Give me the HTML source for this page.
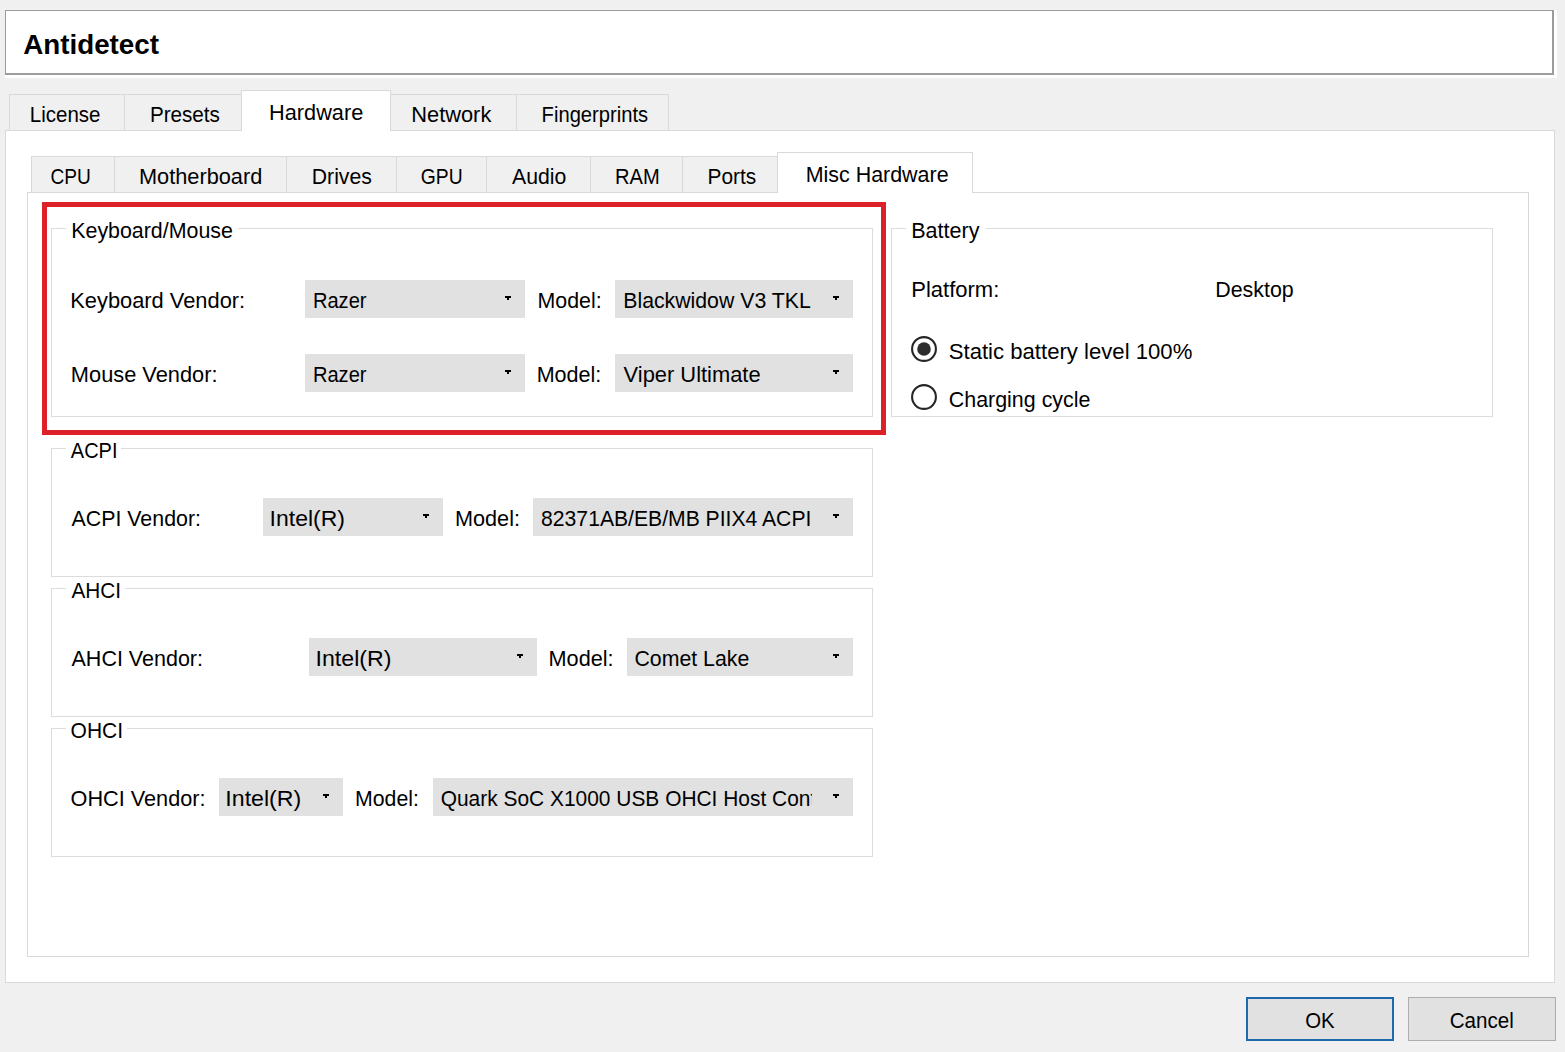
<!DOCTYPE html>
<html><head><meta charset="utf-8"><style>
html,body{margin:0;padding:0;background:#f0f0f0;overflow:hidden}
svg{display:block}
text{font-family:"Liberation Sans",sans-serif;fill:#000}
</style></head><body>
<svg width="1565" height="1052" viewBox="0 0 1565 1052" shape-rendering="crispEdges">
<defs><clipPath id="clip0"><rect x="0" y="0" width="812" height="1052"/></clipPath></defs>
<rect x="0" y="0" width="1565" height="1052" fill="#f0f0f0"/>
<rect x="5" y="10" width="1552" height="68" fill="#ffffff"/>
<rect x="5" y="10" width="1549" height="65" fill="#9c9c9c"/>
<rect x="6" y="11" width="1546" height="62" fill="#ffffff"/>
<rect x="5" y="130" width="1550" height="853" fill="#d9d9d9"/>
<rect x="6" y="131" width="1548" height="851" fill="#ffffff"/>
<rect x="9" y="94" width="116" height="37" fill="#d9d9d9"/>
<rect x="10" y="95" width="114" height="35" fill="#f0f0f0"/>
<rect x="124" y="94" width="118" height="37" fill="#d9d9d9"/>
<rect x="125" y="95" width="116" height="35" fill="#f0f0f0"/>
<rect x="390" y="94" width="127" height="37" fill="#d9d9d9"/>
<rect x="391" y="95" width="125" height="35" fill="#f0f0f0"/>
<rect x="516" y="94" width="153" height="37" fill="#d9d9d9"/>
<rect x="517" y="95" width="151" height="35" fill="#f0f0f0"/>
<rect x="241" y="90" width="150" height="41" fill="#d9d9d9"/>
<rect x="242" y="91" width="148" height="40" fill="#ffffff"/>
<rect x="27" y="192" width="1502" height="765" fill="#d9d9d9"/>
<rect x="28" y="193" width="1500" height="763" fill="#ffffff"/>
<rect x="31" y="156" width="84" height="37" fill="#d9d9d9"/>
<rect x="32" y="157" width="82" height="35" fill="#f0f0f0"/>
<rect x="114" y="156" width="173" height="37" fill="#d9d9d9"/>
<rect x="115" y="157" width="171" height="35" fill="#f0f0f0"/>
<rect x="286" y="156" width="111" height="37" fill="#d9d9d9"/>
<rect x="287" y="157" width="109" height="35" fill="#f0f0f0"/>
<rect x="396" y="156" width="91" height="37" fill="#d9d9d9"/>
<rect x="397" y="157" width="89" height="35" fill="#f0f0f0"/>
<rect x="486" y="156" width="105" height="37" fill="#d9d9d9"/>
<rect x="487" y="157" width="103" height="35" fill="#f0f0f0"/>
<rect x="590" y="156" width="93" height="37" fill="#d9d9d9"/>
<rect x="591" y="157" width="91" height="35" fill="#f0f0f0"/>
<rect x="682" y="156" width="96" height="37" fill="#d9d9d9"/>
<rect x="683" y="157" width="94" height="35" fill="#f0f0f0"/>
<rect x="777" y="152" width="196" height="41" fill="#d9d9d9"/>
<rect x="778" y="153" width="194" height="40" fill="#ffffff"/>
<rect x="51" y="228" width="822" height="189" fill="#dcdcdc"/>
<rect x="52" y="229" width="820" height="187" fill="#ffffff"/>
<rect x="66" y="228" width="172" height="1" fill="#ffffff"/>
<rect x="891" y="228" width="602" height="189" fill="#dcdcdc"/>
<rect x="892" y="229" width="600" height="187" fill="#ffffff"/>
<rect x="906" y="228" width="80" height="1" fill="#ffffff"/>
<rect x="51" y="448" width="822" height="129" fill="#dcdcdc"/>
<rect x="52" y="449" width="820" height="127" fill="#ffffff"/>
<rect x="66" y="448" width="55" height="1" fill="#ffffff"/>
<rect x="51" y="588" width="822" height="129" fill="#dcdcdc"/>
<rect x="52" y="589" width="820" height="127" fill="#ffffff"/>
<rect x="66" y="588" width="59" height="1" fill="#ffffff"/>
<rect x="51" y="728" width="822" height="129" fill="#dcdcdc"/>
<rect x="52" y="729" width="820" height="127" fill="#ffffff"/>
<rect x="66" y="728" width="61" height="1" fill="#ffffff"/>
<rect x="305" y="280" width="220" height="38" fill="#e1e1e1"/>
<rect x="505" y="296" width="6" height="2" fill="#000"/>
<rect x="507" y="298" width="2" height="2" fill="#000"/>
<rect x="615" y="280" width="238" height="38" fill="#e1e1e1"/>
<rect x="833" y="296" width="6" height="2" fill="#000"/>
<rect x="835" y="298" width="2" height="2" fill="#000"/>
<rect x="305" y="354" width="220" height="38" fill="#e1e1e1"/>
<rect x="505" y="370" width="6" height="2" fill="#000"/>
<rect x="507" y="372" width="2" height="2" fill="#000"/>
<rect x="615" y="354" width="238" height="38" fill="#e1e1e1"/>
<rect x="833" y="370" width="6" height="2" fill="#000"/>
<rect x="835" y="372" width="2" height="2" fill="#000"/>
<rect x="263" y="498" width="180" height="38" fill="#e1e1e1"/>
<rect x="423" y="514" width="6" height="2" fill="#000"/>
<rect x="425" y="516" width="2" height="2" fill="#000"/>
<rect x="533" y="498" width="320" height="38" fill="#e1e1e1"/>
<rect x="833" y="514" width="6" height="2" fill="#000"/>
<rect x="835" y="516" width="2" height="2" fill="#000"/>
<rect x="309" y="638" width="228" height="38" fill="#e1e1e1"/>
<rect x="517" y="654" width="6" height="2" fill="#000"/>
<rect x="519" y="656" width="2" height="2" fill="#000"/>
<rect x="627" y="638" width="226" height="38" fill="#e1e1e1"/>
<rect x="833" y="654" width="6" height="2" fill="#000"/>
<rect x="835" y="656" width="2" height="2" fill="#000"/>
<rect x="219" y="778" width="124" height="38" fill="#e1e1e1"/>
<rect x="323" y="794" width="6" height="2" fill="#000"/>
<rect x="325" y="796" width="2" height="2" fill="#000"/>
<rect x="433" y="778" width="420" height="38" fill="#e1e1e1"/>
<rect x="833" y="794" width="6" height="2" fill="#000"/>
<rect x="835" y="796" width="2" height="2" fill="#000"/>
<rect x="42" y="202" width="844" height="5" fill="#dc2129"/>
<rect x="42" y="430" width="844" height="5" fill="#dc2129"/>
<rect x="42" y="202" width="5" height="233" fill="#dc2129"/>
<rect x="881" y="202" width="5" height="233" fill="#dc2129"/>
<circle shape-rendering="geometricPrecision" cx="924" cy="349" r="11.9" fill="none" stroke="#262626" stroke-width="2.1"/>
<circle shape-rendering="geometricPrecision" cx="924" cy="349" r="6.8" fill="#2e2e2e"/>
<circle shape-rendering="geometricPrecision" cx="924" cy="397" r="11.9" fill="none" stroke="#262626" stroke-width="2.1"/>
<rect x="1246" y="997" width="148" height="44" fill="#1e69ab"/>
<rect x="1248" y="999" width="144" height="40" fill="#e1e1e1"/>
<rect x="1408" y="997" width="148" height="44" fill="#adadad"/>
<rect x="1409" y="998" width="146" height="42" fill="#e1e1e1"/>
<g><text transform="translate(23.20,54.10) scale(0.9921,1)" font-size="28" font-weight="bold">Antidetect</text></g>
<g><text transform="translate(29.79,122.00) scale(0.9114,1)" font-size="22.5" font-weight="normal">License</text></g>
<g><text transform="translate(149.88,121.70) scale(0.9183,1)" font-size="22.5" font-weight="normal">Presets</text></g>
<g><text transform="translate(269.03,119.50) scale(0.9664,1)" font-size="22.5" font-weight="normal">Hardware</text></g>
<g><text transform="translate(411.23,121.70) scale(0.9712,1)" font-size="22.5" font-weight="normal">Network</text></g>
<g><text transform="translate(541.60,121.70) scale(0.8975,1)" font-size="22.5" font-weight="normal">Fingerprints</text></g>
<g><text transform="translate(50.45,183.50) scale(0.8507,1)" font-size="22.5" font-weight="normal">CPU</text></g>
<g><text transform="translate(138.93,183.50) scale(0.9678,1)" font-size="22.5" font-weight="normal">Motherboard</text></g>
<g><text transform="translate(311.76,183.50) scale(0.9423,1)" font-size="22.5" font-weight="normal">Drives</text></g>
<g><text transform="translate(420.84,183.50) scale(0.8579,1)" font-size="22.5" font-weight="normal">GPU</text></g>
<g><text transform="translate(512.10,183.50) scale(0.9433,1)" font-size="22.5" font-weight="normal">Audio</text></g>
<g><text transform="translate(615.01,183.50) scale(0.8930,1)" font-size="22.5" font-weight="normal">RAM</text></g>
<g><text transform="translate(707.47,183.50) scale(0.9285,1)" font-size="22.5" font-weight="normal">Ports</text></g>
<g><text transform="translate(805.65,181.50) scale(0.9528,1)" font-size="22.5" font-weight="normal">Misc Hardware</text></g>
<g><text transform="translate(71.25,237.50) scale(0.9508,1)" font-size="22.5" font-weight="normal">Keyboard/Mouse</text></g>
<g><text transform="translate(911.24,237.50) scale(0.9574,1)" font-size="22.5" font-weight="normal">Battery</text></g>
<g><text transform="translate(70.80,457.80) scale(0.8895,1)" font-size="22.5" font-weight="normal">ACPI</text></g>
<g><text transform="translate(71.50,597.80) scale(0.9237,1)" font-size="22.5" font-weight="normal">AHCI</text></g>
<g><text transform="translate(70.56,737.60) scale(0.9352,1)" font-size="22.5" font-weight="normal">OHCI</text></g>
<g><text transform="translate(70.23,308.00) scale(0.9714,1)" font-size="22.5" font-weight="normal">Keyboard Vendor:</text></g>
<g><text transform="translate(312.91,308.00) scale(0.8937,1)" font-size="22.5" font-weight="normal">Razer</text></g>
<g><text transform="translate(537.45,308.00) scale(0.9497,1)" font-size="22.5" font-weight="normal">Model:</text></g>
<g><text transform="translate(623.25,308.00) scale(0.9457,1)" font-size="22.5" font-weight="normal">Blackwidow V3 TKL</text></g>
<g><text transform="translate(70.83,382.00) scale(0.9698,1)" font-size="22.5" font-weight="normal">Mouse Vendor:</text></g>
<g><text transform="translate(312.91,382.00) scale(0.8937,1)" font-size="22.5" font-weight="normal">Razer</text></g>
<g><text transform="translate(536.64,382.00) scale(0.9589,1)" font-size="22.5" font-weight="normal">Model:</text></g>
<g><text transform="translate(623.60,382.00) scale(0.9724,1)" font-size="22.5" font-weight="normal">Viper Ultimate</text></g>
<g><text transform="translate(71.50,526.00) scale(0.9498,1)" font-size="22.5" font-weight="normal">ACPI Vendor:</text></g>
<g><text transform="translate(269.55,526.00) scale(1.0229,1)" font-size="22.5" font-weight="normal">Intel(R)</text></g>
<g><text transform="translate(454.94,526.00) scale(0.9635,1)" font-size="22.5" font-weight="normal">Model:</text></g>
<g><text transform="translate(541.10,526.00) scale(0.9397,1)" font-size="22.5" font-weight="normal">82371AB/EB/MB PIIX4 ACPI</text></g>
<g><text transform="translate(71.50,666.00) scale(0.9566,1)" font-size="22.5" font-weight="normal">AHCI Vendor:</text></g>
<g><text transform="translate(315.54,666.00) scale(1.0299,1)" font-size="22.5" font-weight="normal">Intel(R)</text></g>
<g><text transform="translate(548.54,666.00) scale(0.9635,1)" font-size="22.5" font-weight="normal">Model:</text></g>
<g><text transform="translate(634.45,666.00) scale(0.9474,1)" font-size="22.5" font-weight="normal">Comet Lake</text></g>
<g><text transform="translate(70.54,806.00) scale(0.9643,1)" font-size="22.5" font-weight="normal">OHCI Vendor:</text></g>
<g><text transform="translate(225.34,806.00) scale(1.0299,1)" font-size="22.5" font-weight="normal">Intel(R)</text></g>
<g><text transform="translate(355.05,806.00) scale(0.9467,1)" font-size="22.5" font-weight="normal">Model:</text></g>
<g clip-path="url(#clip0)"><text transform="translate(440.67,806.00) scale(0.9305,1)" font-size="22.5" font-weight="normal">Quark SoC X1000 USB OHCI Host Cont</text></g>
<g><text transform="translate(911.22,296.60) scale(0.9787,1)" font-size="22.5" font-weight="normal">Platform:</text></g>
<g><text transform="translate(1215.25,296.80) scale(0.9503,1)" font-size="22.5" font-weight="normal">Desktop</text></g>
<g><text transform="translate(948.72,359.10) scale(0.9845,1)" font-size="22.5" font-weight="normal">Static battery level 100%</text></g>
<g><text transform="translate(948.75,406.90) scale(0.9524,1)" font-size="22.5" font-weight="normal">Charging cycle</text></g>
<g><text transform="translate(1305.19,1028.00) scale(0.9079,1)" font-size="22.5" font-weight="normal">OK</text></g>
<g><text transform="translate(1449.68,1028.00) scale(0.9157,1)" font-size="22.5" font-weight="normal">Cancel</text></g>
</svg></body></html>
